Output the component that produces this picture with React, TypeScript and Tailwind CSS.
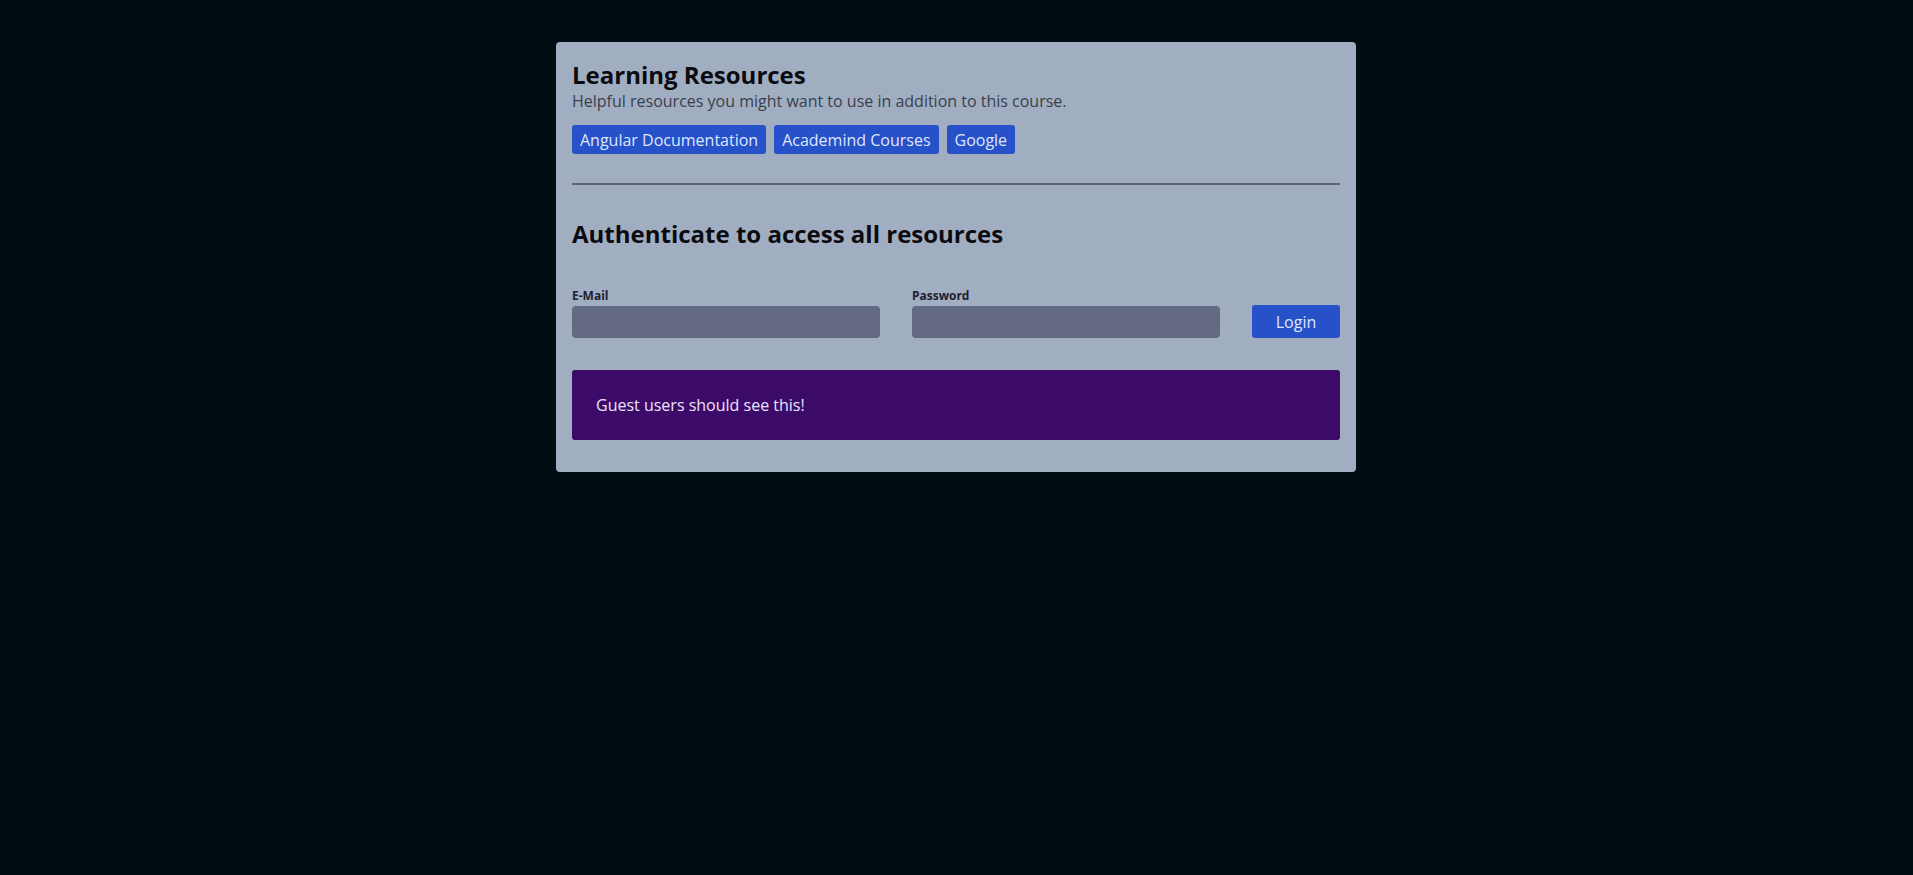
import React from "react";

export default function App() {
  return (
    <div className="min-h-[875px] w-full bg-[#000d13] pt-[42px] pr-px" style={{ fontFamily: '"Open Sans", sans-serif' }}>
      <div className="mx-auto w-[800px] rounded-[4px] bg-[#a1aec2] px-4 pt-[18px] pb-8">
        <h1 className="text-[24px] leading-[30px] font-bold text-[#0b0b0f]">Learning Resources</h1>
        <p className="text-base leading-[22px] text-[#393f4c]">Helpful resources you might want to use in addition to this course.</p>
        <div className="mt-[13px] flex gap-2">
          {["Angular Documentation", "Academind Courses", "Google"].map((t) => (
            <a key={t} className="rounded-[3px] bg-[#2651c9] px-2 pt-[5px] pb-[3px] text-base leading-[21px] text-[#dfe6ff]">
              {t}
            </a>
          ))}
        </div>
        <div className="mt-[29px] h-[2px] bg-[#5f6470]" />
        <h2 className="mt-[34px] text-[24px] leading-[30px] font-bold text-[#0b0b0f]">Authenticate to access all resources</h2>
        <div className="mt-[38px] flex items-end gap-8">
          <div className="flex w-[308px] flex-col">
            <label className="pt-px text-[12px] leading-[16px] font-bold text-[#1d2130]">E-Mail</label>
            <div className="mt-[2px] h-8 rounded-[4px] bg-[#636a82]" />
          </div>
          <div className="flex w-[308px] flex-col">
            <label className="pt-px text-[12px] leading-[16px] font-bold text-[#1d2130]">Password</label>
            <div className="mt-[2px] h-8 rounded-[4px] bg-[#636a82]" />
          </div>
          <button className="h-[33px] w-[88px] rounded-[3px] bg-[#2651c9] text-base text-[#dfe6ff]">Login</button>
        </div>
        <div className="mt-8 rounded-[3px] bg-[#3c0a69] px-6 py-6 text-base leading-[22px] text-[#ece4ff]">
          Guest users should see this!
        </div>
      </div>
    </div>
  );
}
